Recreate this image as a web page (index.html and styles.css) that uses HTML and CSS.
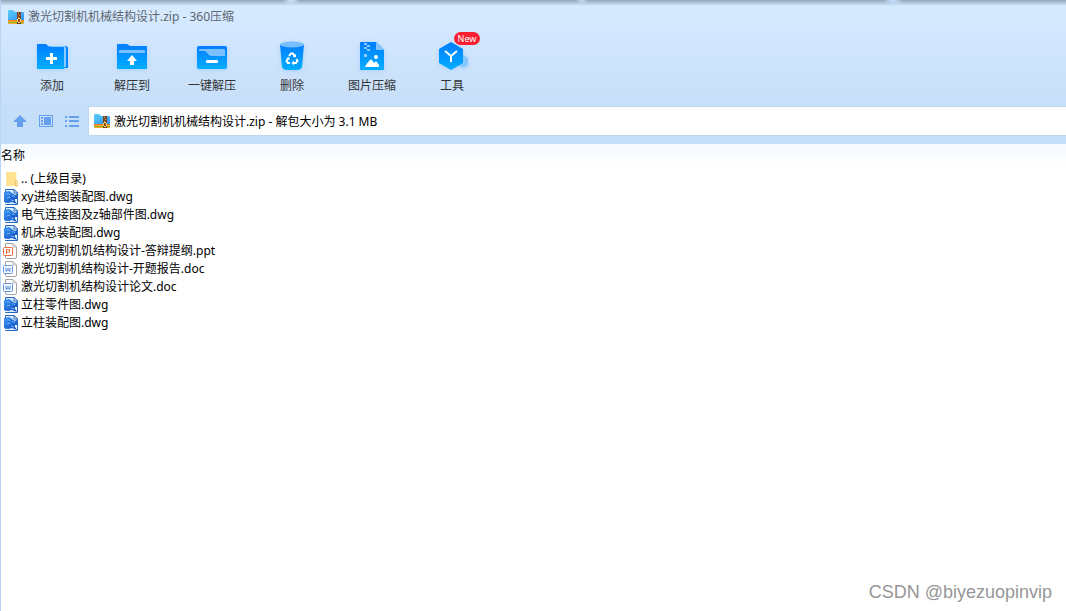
FILE: index.html
```html
<!DOCTYPE html>
<html lang="zh-CN">
<head>
<meta charset="utf-8">
<title>激光切割机机械结构设计.zip - 360压缩</title>
<link rel="stylesheet" href="styles.css">
</head>
<body>
<svg class="defs" aria-hidden="true">
  <defs>
    <linearGradient id="blue" x1="0" y1="0" x2="0" y2="1"><stop offset="0" stop-color="#007dff"/><stop offset="1" stop-color="#00adff"/></linearGradient>
    <linearGradient id="folder" x1="0" y1="0" x2="1" y2="1"><stop offset="0" stop-color="#5dd0fb"/><stop offset="1" stop-color="#2c8fee"/></linearGradient>
    <linearGradient id="dwgfill" x1="0" y1="0" x2="1" y2="1"><stop offset="0" stop-color="#3f9bf5"/><stop offset="1" stop-color="#0b47bd"/></linearGradient>
    <symbol id="zip" viewBox="0 0 16 14">
      <path d="M0 1Q0 0 1 0H5L7 2H15Q16 2 16 3V11H0Z" fill="url(#folder)"/>
      <path d="M0 10H16V13Q16 14 15 14H1Q0 14 0 13Z" fill="#f5a623"/>
      <path d="M0 10H16V11H0Z" fill="#f27a1a"/><path d="M0 12H16V13H0Z" fill="#8db63a"/>
      <path d="M9 2H13V14H9Z" fill="#7b421f"/>
      <path d="M10 3H11V4H10ZM11 5H12V6H11ZM10 7H11V8H10Z" fill="#d9a56c"/>
      <path d="M10 8H12V9H13V12H12V13H10V12H9V9H10Z" fill="#ffd968"/><path d="M10 9H12V12H10Z" fill="#8f4a18"/>
    </symbol>
    <symbol id="up-folder" viewBox="0 0 16 18">
      <path d="M3 1H14V17H3Z" fill="#ffe391"/><path d="M3 1H4V17H3Z" fill="#f6d67c"/>
      <path d="M13 11H15V17H13Z" fill="#fff0b5" stroke="#e6c45d"/>
    </symbol>
    <symbol id="dwg" viewBox="0 0 16 16">
      <path d="M2.500 .5H11L14.500 4V15.500H2.500Z" fill="#d9ebff" stroke="#2869bd"/>
      <path d="M11 .5V4H14.500Z" fill="#fff" stroke="#2869bd"/>
      <path d="M1 3L6 2L9 4L12 6L14 5V10L12 12L14 15L9 13L5 14L1 13Z" fill="url(#dwgfill)"/>
      <path d="M4 5Q6 4 7 6M4 9L7 8M9 7Q11 6 12 8M8 11L11 12" fill="none" stroke="#75b7ff"/>
      <path d="M12 10H14V12H12ZM2 14H5V15H2Z" fill="#f3f9ff"/>
    </symbol>
    <symbol id="ppt" viewBox="0 0 16 16">
      <path d="M2.500 .5H10L13.500 4V14Q13.500 15.500 12 15.500H4Q2.500 15.500 2.500 14Z" fill="#fff" stroke="#a4a4a4"/><path d="M10 .5V4H13.500" fill="none" stroke="#b4b4b4"/>
      <rect x=".5" y="4.500" width="9" height="8" rx="1" fill="#fff" stroke="#f26c3e"/><path d="M3.500 11V6.500H6.500V9H3.500" fill="none" stroke="#f26c3e"/>
    </symbol>
    <symbol id="doc" viewBox="0 0 16 16">
      <path d="M2.500 .5H10L13.500 4V14Q13.500 15.500 12 15.500H4Q2.500 15.500 2.500 14Z" fill="#fff" stroke="#a4a4a4"/><path d="M10 .5V4H13.500" fill="none" stroke="#b4b4b4"/>
      <rect x=".5" y="4.500" width="9" height="8" rx="1" fill="#fff" stroke="#5d93ee"/><path d="M3 6.500V10.500L5 9L7 10.500V6.500M5 7V9" fill="none" stroke="#4d86e8"/>
    </symbol>
  </defs>
</svg>

<div class="window">
  <header class="chrome">
    <div class="titlebar"><svg class="zip-icon"><use href="#zip"/></svg><h1>激光切割机机械结构设计.zip - 360压缩</h1></div>

    <nav class="toolbar" aria-label="工具栏">
      <button type="button" class="tool">
        <svg class="tool-icon" viewBox="0 0 32 32"><path d="M13 5H29Q32 5 32 7V27H13Z" fill="#0087ff"/><path d="M14 5H28Q30 5 30 7V26H28V7H15Z" fill="#8acbff"/><path d="M1 3H10L13 6H27Q28 6 28 7V28H2Q1 28 1 27Z" fill="url(#blue)"/><path d="M15.500 12V23M10 17.500H21" stroke="#fff" stroke-width="3"/></svg>
        <span>添加</span>
      </button>
      <button type="button" class="tool">
        <svg class="tool-icon" viewBox="0 0 32 32"><path d="M1 4Q1 3 2 3H11L14 5H30Q31 5 31 6V27Q31 28 30 28H2Q1 28 1 27Z" fill="url(#blue)"/><path d="M3 12V10Q3 9 4 9H28Q29 9 29 10V12Z" fill="#7abfff"/><path d="M16 14L21 20H18V24H14V20H11Z" fill="#fff"/></svg>
        <span>解压到</span>
      </button>
      <button type="button" class="tool">
        <svg class="tool-icon" viewBox="0 0 32 32"><rect x="1" y="5" width="30" height="23" rx="2" fill="url(#blue)"/><path d="M3 8H28Q29 8 29 9V15H15Q13 15 11 12Q10 10 8 10H3Z" fill="#7abfff"/><rect x="10" y="19" width="12" height="3" rx="1" fill="#fff"/></svg>
        <span>一键解压</span>
      </button>
      <button type="button" class="tool">
        <svg class="tool-icon" viewBox="0 0 32 32"><path d="M4 3H28L26 26Q25 29 21 29H11Q7 29 6 26Z" fill="url(#blue)"/><ellipse cx="16" cy="3.500" rx="12" ry="3" fill="#7abfff"/><g fill="none" stroke="#fff" stroke-width="2"><path d="M13 15L15 12.500H17L18.500 15M20.500 18L21.500 20L20 22H17.500M14 22H12L10.500 20L12 18"/></g><path d="M20 13V16.500L16.500 15.500ZM18 19.500V24.500L15.500 22ZM10 17.500L13 16L14 19Z" fill="#fff"/></svg>
        <span>删除</span>
      </button>
      <button type="button" class="tool">
        <svg class="tool-icon" viewBox="0 0 32 32"><path d="M4 2Q4 1 5 1H20L28 9V28Q28 29 27 29H5Q4 29 4 28Z" fill="url(#blue)"/><path d="M20 1V9H28Z" fill="#82c6ff"/><path d="M8 2H11V4H8ZM11 4H14V6H11ZM8 6H11V8H8ZM11 8H14V10H11ZM8 13H11V16H8Z" fill="#8bcaff"/><path d="M9 26Q10 23 14 19Q15 18 16 19L18 22L20 20L23 24V26Z" fill="#fff"/><circle cx="20" cy="16" r="2" fill="#fff"/></svg>
        <span>图片压缩</span>
      </button>
      <button type="button" class="tool">
        <svg class="tool-icon" viewBox="0 0 32 32"><path d="M27 14L32 17V24L27 27L22 24V17Z" fill="#84c8ff"/><path d="M15 1L27 8V22L15 29L3 22V8Z" fill="url(#blue)"/><path d="M9 10L15 15L21 10M15 15V21" fill="none" stroke="#fff" stroke-width="2"/></svg>
        <span>工具</span><span class="badge">New</span>
      </button>
    </nav>

    <div class="navigation">
      <button type="button" class="nav-button" aria-label="向上"><svg viewBox="0 0 16 16"><path d="M8 2L15 9H11V14H5V9H1Z"/></svg></button>
      <button type="button" class="nav-button" aria-label="预览"><svg viewBox="0 0 16 16"><path fill-rule="evenodd" d="M1 2H15V14H1ZM2 3V13H14V3Z"/><path d="M3 4H5V6H3ZM3 7H5V9H3ZM3 10H5V12H3ZM6 4H13V12H6Z"/></svg></button>
      <button type="button" class="nav-button" aria-label="列表"><svg viewBox="0 0 16 16"><path d="M1 3H3V5H1ZM1 7H3V9H1ZM1 12H3V14H1ZM5 3H15V5H5ZM5 7H15V9H5ZM5 12H15V14H5Z"/></svg></button>
      <label class="address"><svg class="zip-icon"><use href="#zip"/></svg><input type="text" aria-label="路径" value="激光切割机机械结构设计.zip - 解包大小为 3.1 MB"></label>
    </div>
  </header>

  <main>
    <table class="files">
      <thead><tr><th scope="col">名称</th></tr></thead>
      <tbody>
        <tr><td><div class="file"><svg><use href="#up-folder"/></svg>.. (上级目录)</div></td></tr>
        <tr><td><div class="file"><svg><use href="#dwg"/></svg>xy进给图装配图.dwg</div></td></tr>
        <tr><td><div class="file"><svg><use href="#dwg"/></svg>电气连接图及z轴部件图.dwg</div></td></tr>
        <tr><td><div class="file"><svg><use href="#dwg"/></svg>机床总装配图.dwg</div></td></tr>
        <tr><td><div class="file"><svg><use href="#ppt"/></svg>激光切割机饥结构设计-答辩提纲.ppt</div></td></tr>
        <tr><td><div class="file"><svg><use href="#doc"/></svg>激光切割机结构设计-开题报告.doc</div></td></tr>
        <tr><td><div class="file"><svg><use href="#doc"/></svg>激光切割机结构设计论文.doc</div></td></tr>
        <tr><td><div class="file"><svg><use href="#dwg"/></svg>立柱零件图.dwg</div></td></tr>
        <tr><td><div class="file"><svg><use href="#dwg"/></svg>立柱装配图.dwg</div></td></tr>
      </tbody>
    </table>
  </main>
  <footer class="watermark">CSDN @biyezuopinvip</footer>
</div>
</body>
</html>
```
FILE: styles.css
```css
* { box-sizing: border-box; }
body { margin: 0; background: #fff; color: #000; font: 12px/18px "Noto Sans", "Noto Sans CJK SC", sans-serif; }
button, input { font: inherit; color: inherit; border: 0; padding: 0; background: none; }
.defs { position: absolute; width: 0; height: 0; }
.window { min-height: 100vh; display: flex; flex-direction: column; border-left: 1px solid #b7d6f5; }
.chrome {
  padding-bottom: 8px;
  background:
    radial-gradient(ellipse 9px 6px at 290px 0, #d0e6ff, transparent),
    radial-gradient(ellipse 6px 6px at 581px 0, #c1d9f2, transparent),
    radial-gradient(ellipse 10px 6px at 892px 0, #c9e3ff, transparent),
    linear-gradient(#8fa5ba 0, #a9bed1 2px, transparent 6px),
    linear-gradient(#d6ebff 0, #d4e9ff 24px, #cfe4fd 55px, #cae1fa 85px, #c6dff8 107px, #c3def9 144px);
}
.titlebar { display: flex; align-items: center; gap: 4px; height: 34px; padding-left: 7px; }
.titlebar h1 { margin: 0; font: inherit; color: #5f6670; }
.zip-icon { width: 16px; height: 14px; flex: none; }
.toolbar { display: flex; height: 72px; padding: 7px 0 0 11px; }
.tool { position: relative; width: 80px; display: flex; flex-direction: column; align-items: center; gap: 4px; color: #333; }
.tool-icon { width: 32px; height: 32px; filter: drop-shadow(0 1px 2px #8abff580); }
.badge { position: absolute; left: 42px; top: -9px; width: 26px; height: 13px; border-radius: 7px; background: #fa1e32; color: #fff; font-size: 9px; line-height: 13px; text-align: center; }
.navigation { display: flex; align-items: center; gap: 10px; padding-left: 11px; }
.nav-button { width: 16px; height: 16px; }
.nav-button svg { display: block; width: 16px; height: 16px; fill: #65a0ee; }
.address { flex: 1; display: flex; align-items: center; gap: 4px; height: 30px; margin-left: -2px; padding-left: 5px; background: #fff; border: 1px solid #bcd8f2; border-right: 0; }
.address input { flex: 1; min-width: 0; height: 24px; outline: 0; }
main { flex: 1; background: linear-gradient(#f3f9ff, #fff 24px); }
.files { width: 100%; border-collapse: collapse; }
.files th { height: 26px; padding: 0 0 2px; text-align: left; font-weight: normal; }
.files td { padding: 0; }
.file { display: flex; align-items: center; gap: 2px; height: 18px; padding-left: 2px; white-space: nowrap; }
.file svg { width: 16px; height: 16px; flex: none; }
.watermark { padding: 0 14px 7px; text-align: right; color: #969696; font: 18px/24px "Liberation Sans", Arial, sans-serif; }
```
